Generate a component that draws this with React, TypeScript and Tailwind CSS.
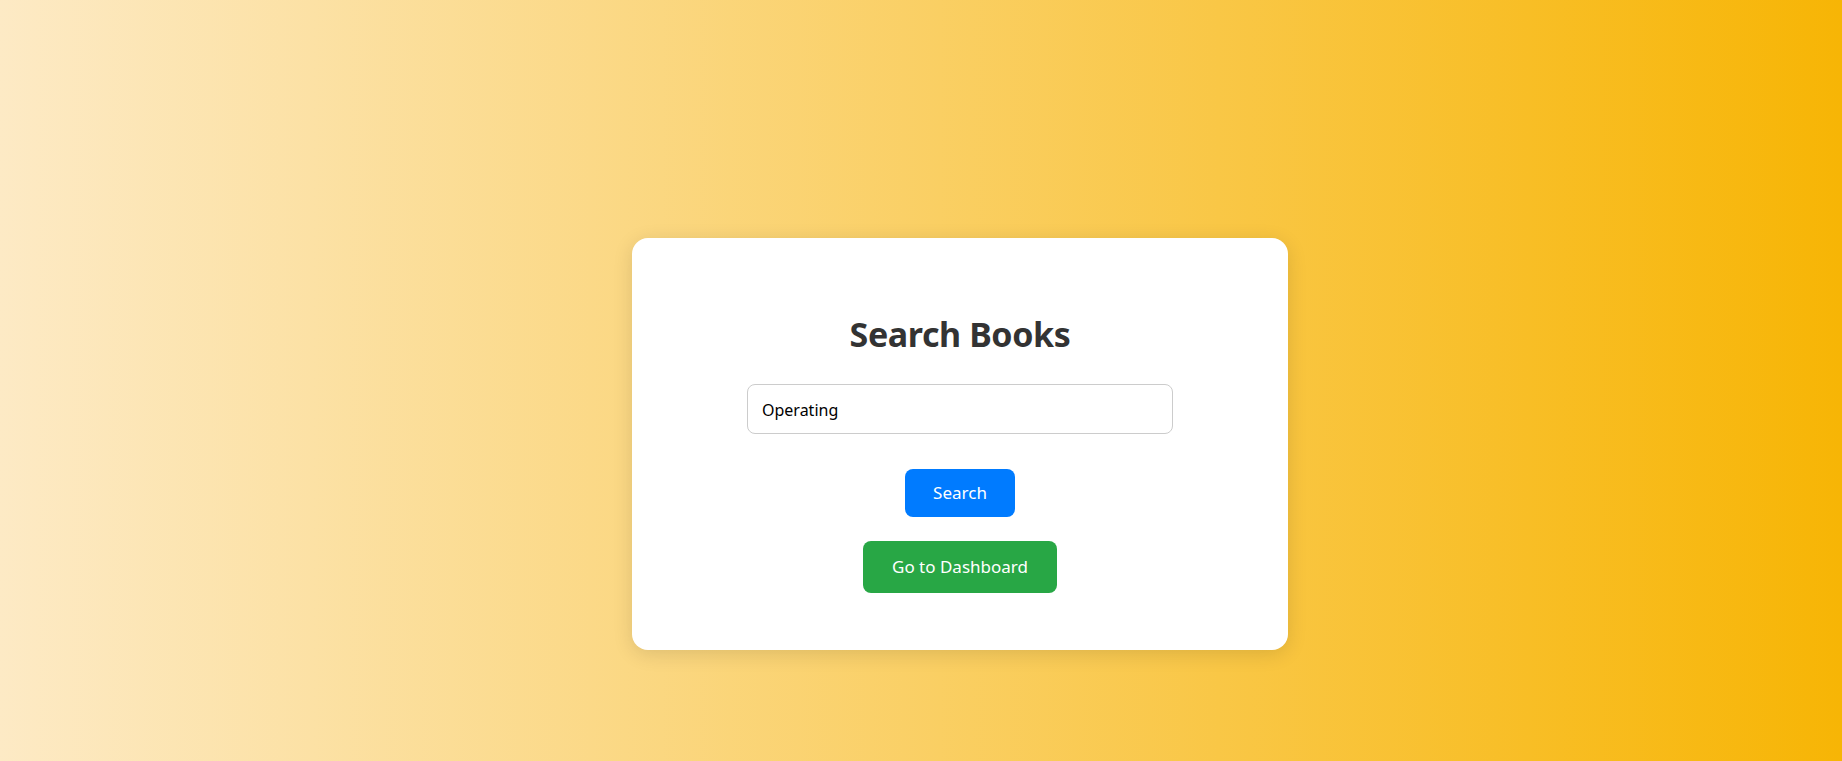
import React, { FC, useState } from "react";

const SearchBooks: FC = () => {
  const [query, setQuery] = useState("Operating");

  return (
    <div className="bg-white rounded-[16px] shadow-[0_4px_20px_rgba(0,0,0,0.12)] w-[656px] h-[412px] pt-[76px] flex flex-col items-center">
      <h2 className="text-[34px] leading-[40px] font-bold tracking-[-0.4px] text-[#333]">
        Search Books
      </h2>

      <input
        value={query}
        onChange={(e) => setQuery(e.target.value)}
        className="mt-[30px] w-[426px] h-[50px] border border-[#ccc] rounded-lg px-[14px] pt-[2px] text-[16px] text-black outline-none"
      />

      <button className="mt-[35px] w-[110px] h-[48px] rounded-lg bg-[#007bff] text-white text-[17px] flex items-center justify-center">
        Search
      </button>

      <button className="mt-[24px] w-[194px] h-[52px] rounded-lg bg-[#28a745] text-white text-[17px] flex items-center justify-center">
        Go to Dashboard
      </button>
    </div>
  );
};

export default function App() {
  return (
    <div
      className="min-h-screen w-full flex justify-center items-start pt-[238px] pl-[78px] bg-[linear-gradient(to_right,#fdeac5,#f7b505)]"
      style={{ fontFamily: '"Noto Sans", "Open Sans", sans-serif' }}
    >
      <SearchBooks />
    </div>
  );
}
